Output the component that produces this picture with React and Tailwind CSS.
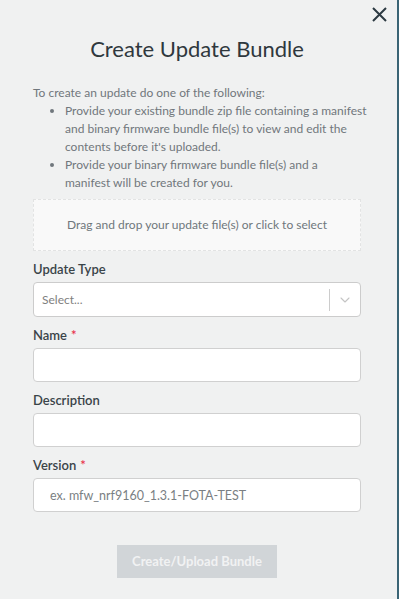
import React from "react";
import { ChevronDown } from "lucide-react";

function Field({ label, required, children }) {
  return (
    <div className="mb-[9px]">
      <label className="block text-[13px] leading-[18px] font-semibold text-[#3a4449] mb-[4px]">
        {label}
        {required && <span className="text-[#e8324a] ml-[4px]">*</span>}
      </label>
      {children}
    </div>
  );
}

export default function App() {
  return (
    <div className="flex min-h-[599px] bg-[#3a6475]" style={{ fontFamily: "Lato, 'Open Sans', sans-serif" }}>
      <div className="w-[397px] bg-[#f0f1f1] pl-[33px] pr-[36px] pb-[21px]">
        {/* Close */}
        <div className="flex justify-end -mr-[26px] pt-[7px]">
          <button aria-label="Close" className="text-[#2c3a42]">
            <svg width="15" height="15" viewBox="0 0 15 15" fill="none" stroke="currentColor" strokeWidth="2">
              <path d="M1 1L14 14M14 1L1 14" />
            </svg>
          </button>
        </div>

        <h1 className="text-center text-[22px] leading-[28px] text-[#2f383d] mt-[13px]">
          Create Update Bundle
        </h1>

        {/* Intro */}
        <div className="mt-[21px] -mr-[12px] text-[12px] leading-[18px] text-[#70777c]">
          <p>To create an update do one of the following:</p>
          <ul className="list-disc pl-[32px]">
            <li>
              Provide your existing bundle zip file containing a manifest and binary firmware bundle file(s) to view and
              edit the contents before it's uploaded.
            </li>
            <li>
              Provide your binary firmware bundle file(s) and a<br />
              manifest will be created for you.
            </li>
          </ul>
        </div>

        {/* Dropzone */}
        <div className="mt-[7px] h-[52px] flex items-center justify-center border border-dashed border-[#e2e3e3] bg-[#f9f9f9] text-[12px] text-[#6f777c]">
          Drag and drop your update file(s) or click to select
        </div>

        <div className="mt-[9px]">
          <Field label="Update Type">
            <div className="h-[35px] flex items-center bg-white border border-[#cccccc] rounded-[4px]">
              <span className="flex-1 pl-[8px] text-[12px] text-[#808080]">Select...</span>
              <span className="w-px h-[22px] bg-[#cccccc]" />
              <span className="w-[30px] flex justify-center text-[#c4c4c4]">
                <ChevronDown size={16} strokeWidth={1.6} />
              </span>
            </div>
          </Field>

          <Field label="Name" required>
            <input className="w-full h-[34px] bg-white border border-[#d0d0d0] rounded-[4px] px-[16px] text-[12px] outline-none" />
          </Field>

          <Field label="Description">
            <input className="w-full h-[34px] bg-white border border-[#d0d0d0] rounded-[4px] px-[16px] text-[12px] outline-none" />
          </Field>

          <Field label="Version" required>
            <input
              placeholder="ex. mfw_nrf9160_1.3.1-FOTA-TEST"
              className="w-full h-[34px] bg-white border border-[#d0d0d0] rounded-[4px] px-[16px] text-[12.5px] outline-none placeholder:text-[#7a7f83]"
            />
          </Field>
        </div>

        <div className="flex justify-center mt-[33px]">
          <button
            disabled
            className="w-[160px] h-[33px] bg-[#d1d5d8] text-[#f1f2f3] text-[13px] font-bold"
          >
            Create/Upload Bundle
          </button>
        </div>
      </div>
      <div className="flex-1 bg-[#3a6475]" />
    </div>
  );
}
